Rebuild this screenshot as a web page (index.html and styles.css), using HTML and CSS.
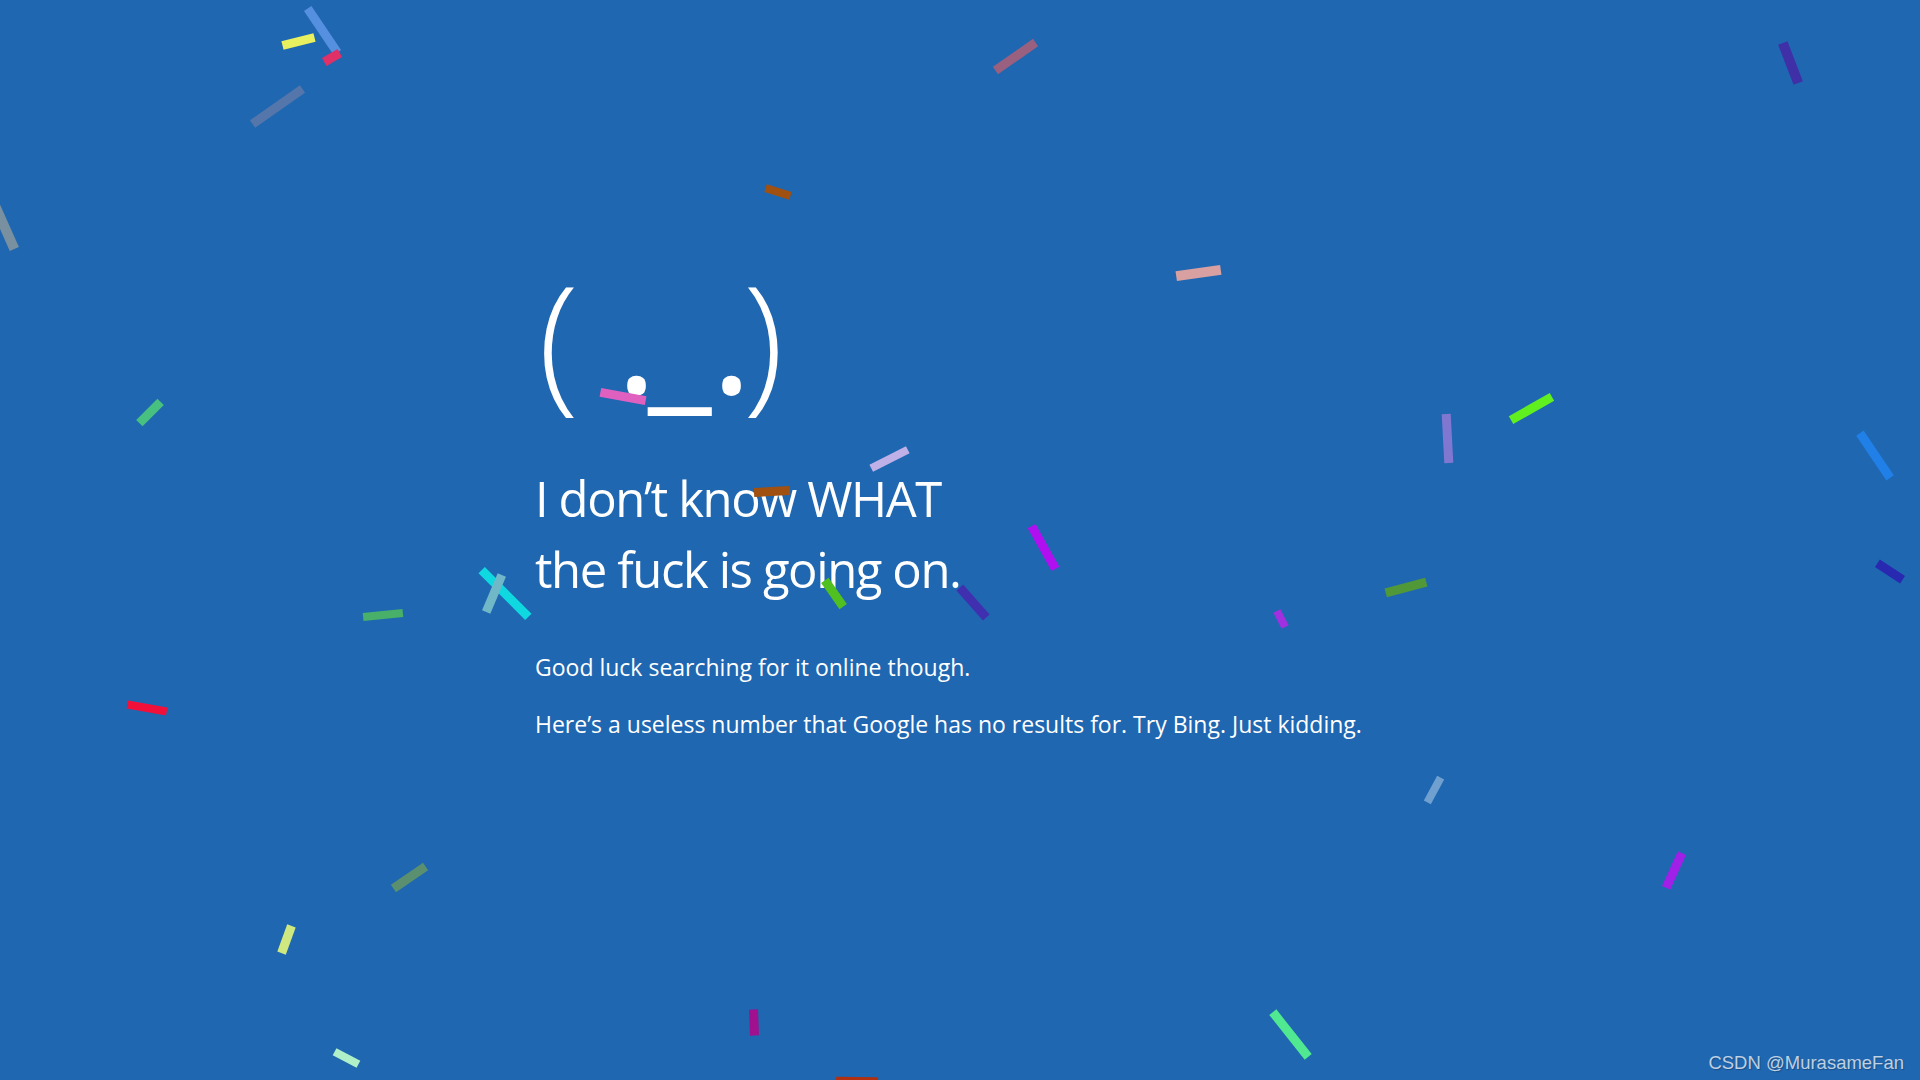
FILE: index.html
```html
<!DOCTYPE html>
<html lang="en">
<head>
<meta charset="utf-8">
<title>:(</title>
<link rel="stylesheet" href="styles.css">
</head>
<body>
<main class="screen">
  <div class="face"><span class="g paren-l">(</span><span class="g dot dot-l">.</span><span class="g under">_</span><span class="g dot dot-r">.</span><span class="g paren-r">)</span></div>
  <h1 class="headline">I don’t know WHAT<br>the fuck is going on.</h1>
  <p class="info">Good luck searching for it online though.</p>
  <p class="info">Here’s a useless number that Google has no results for. Try Bing. Just kidding.</p>
</main>
<div class="confetti-layer" aria-hidden="true">
  <i class="cf c1"></i><i class="cf c2"></i><i class="cf c3"></i><i class="cf c4"></i><i class="cf c5"></i>
  <i class="cf c6"></i><i class="cf c7"></i><i class="cf c8"></i><i class="cf c9"></i><i class="cf c10"></i>
  <i class="cf c11"></i><i class="cf c12"></i><i class="cf c13"></i><i class="cf c14"></i><i class="cf c15"></i>
  <i class="cf c16"></i><i class="cf c17"></i><i class="cf c18"></i><i class="cf c19"></i><i class="cf c20"></i>
  <i class="cf c21"></i><i class="cf c22"></i><i class="cf c23"></i><i class="cf c24"></i><i class="cf c25"></i>
  <i class="cf c26"></i><i class="cf c27"></i><i class="cf c28"></i><i class="cf c29"></i><i class="cf c30"></i>
  <i class="cf c31"></i><i class="cf c32"></i><i class="cf c33"></i><i class="cf c34"></i>
</div>
<div class="watermark">CSDN @MurasameFan</div>
</body>
</html>
```
FILE: styles.css
```css
html, body {
  margin: 0;
  padding: 0;
}
body {
  width: 1920px;
  height: 1080px;
  overflow: hidden;
  position: relative;
  background: #1f67b1;
  color: #ffffff;
  font-family: "Open Sans", "Noto Sans", sans-serif;
}
.screen {
  padding: 257px 0 0 535px;
}
.face {
  height: 150px;
  font-size: 150px;
  line-height: 150px;
  font-weight: 350;
  white-space: nowrap;
}
.g {
  display: inline-block;
  text-align: center;
}
.paren-l { width: 47px; }
.dot { width: 30px; font-size: 160px; font-weight: 400; }
.dot-l { margin-left: 33.5px; }
.under { width: 62.5px; margin-left: 2.5px; font-size: 145px; font-weight: 400; }
.dot-r { margin-left: 0; }
.paren-r { width: 39px; margin-left: 2.5px; }
.headline {
  margin: 55.5px 0 0;
  font-size: 49px;
  line-height: 71px;
  font-weight: 400;
  letter-spacing: -1.4px;
}
.info {
  margin: 0;
  font-size: 23px;
  line-height: 57px;
}
.headline + .info { margin-top: 34px; }

.confetti-layer {
  position: absolute;
  inset: 0;
  pointer-events: none;
}
.cf {
  position: absolute;
  left: calc(var(--x) - var(--l) / 2);
  top: calc(var(--y) - var(--w) / 2);
  width: var(--l);
  height: var(--w);
  background: var(--c);
  transform: rotate(var(--r));
}
.c1 { --x: 322px; --y: 30px; --l: 53px; --w: 9px; --r: 56deg; --c: #5590e0; }
.c2 { --x: 298px; --y: 41px; --l: 33px; --w: 9px; --r: -14deg; --c: #e8f060; }
.c3 { --x: 332px; --y: 57px; --l: 18px; --w: 9px; --r: -30deg; --c: #e03068; }
.c4 { --x: 277px; --y: 106px; --l: 61px; --w: 9px; --r: -35deg; --c: #5576aa; }
.c5 { --x: 5px; --y: 228px; --l: 46px; --w: 10px; --r: 66deg; --c: #7890a0; }
.c6 { --x: 1015px; --y: 56px; --l: 49px; --w: 9px; --r: -35deg; --c: #9a6080; }
.c7 { --x: 1198px; --y: 273px; --l: 45px; --w: 10px; --r: -8deg; --c: #d8a0a0; }
.c8 { --x: 150px; --y: 412px; --l: 30px; --w: 9px; --r: -45deg; --c: #48c080; }
.c9 { --x: 147px; --y: 708px; --l: 40px; --w: 8px; --r: 10deg; --c: #f0103a; }
.c10 { --x: 383px; --y: 615px; --l: 40px; --w: 8px; --r: -6deg; --c: #48b068; }
.c11 { --x: 505px; --y: 593px; --l: 66px; --w: 9px; --r: 45deg; --c: #10d8e0; }
.c12 { --x: 494px; --y: 593px; --l: 40px; --w: 9px; --r: 113deg; --c: #70b8c8; }
.c13 { --x: 409px; --y: 877px; --l: 39px; --w: 9px; --r: -34.5deg; --c: #5a9070; }
.c14 { --x: 286px; --y: 939px; --l: 29px; --w: 9px; --r: 110deg; --c: #d0e880; }
.c15 { --x: 346px; --y: 1058px; --l: 27px; --w: 8px; --r: 28deg; --c: #b0f0c8; }
.c16 { --x: 778px; --y: 192px; --l: 26px; --w: 8px; --r: 17deg; --c: #a05010; }
.c17 { --x: 623px; --y: 396px; --l: 46px; --w: 9px; --r: 10.5deg; --c: #e060c0; }
.c18 { --x: 889px; --y: 459px; --l: 41px; --w: 8px; --r: -27deg; --c: #c0b0e8; }
.c19 { --x: 772px; --y: 491px; --l: 36px; --w: 9px; --r: -3deg; --c: #a05010; }
.c20 { --x: 1043px; --y: 547px; --l: 49px; --w: 9px; --r: 61deg; --c: #b010f0; }
.c21 { --x: 834px; --y: 593px; --l: 32px; --w: 9px; --r: 55deg; --c: #50c020; }
.c22 { --x: 973px; --y: 602px; --l: 40px; --w: 9px; --r: 48.5deg; --c: #4030b0; }
.c23 { --x: 1434px; --y: 790px; --l: 28px; --w: 8px; --r: 118.5deg; --c: #70a0d0; }
.c24 { --x: 754px; --y: 1022px; --l: 26px; --w: 9px; --r: 88deg; --c: #a0108f; }
.c25 { --x: 1290px; --y: 1034px; --l: 57px; --w: 9px; --r: 51.6deg; --c: #50e890; }
.c26 { --x: 857px; --y: 1082px; --l: 42px; --w: 10px; --r: 1deg; --c: #b03010; }
.c27 { --x: 1447px; --y: 438px; --l: 49px; --w: 9px; --r: 87deg; --c: #8078d0; }
.c28 { --x: 1531px; --y: 408px; --l: 47px; --w: 9px; --r: -29.5deg; --c: #60f020; }
.c29 { --x: 1875px; --y: 455px; --l: 54px; --w: 9px; --r: 56deg; --c: #2080e8; }
.c30 { --x: 1890px; --y: 571px; --l: 30px; --w: 9px; --r: 33deg; --c: #2828b0; }
.c31 { --x: 1406px; --y: 587px; --l: 42px; --w: 9px; --r: -15deg; --c: #509838; }
.c32 { --x: 1281px; --y: 619px; --l: 18px; --w: 8px; --r: 62.6deg; --c: #a030e0; }
.c33 { --x: 1790px; --y: 63px; --l: 43px; --w: 10px; --r: 69deg; --c: #4030a8; }
.c34 { --x: 1674px; --y: 870px; --l: 38px; --w: 9px; --r: 114.6deg; --c: #a020e8; }

.watermark {
  position: absolute;
  right: 16px;
  bottom: 6px;
  font-family: "Liberation Sans", Arial, sans-serif;
  font-size: 18.5px;
  line-height: 22px;
  color: rgba(255, 255, 255, 0.72);
  text-shadow: 1px 1px 1px rgba(0, 0, 0, 0.25);
}
```
